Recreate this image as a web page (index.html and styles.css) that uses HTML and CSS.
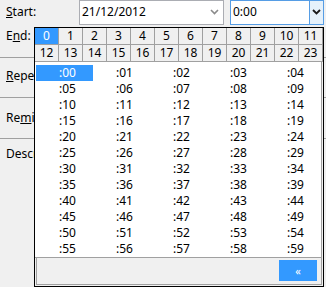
FILE: index.html
```html
<!DOCTYPE html>
<html lang="en">
<head>
  <meta charset="UTF-8">
  <title>Event time</title>
  <link rel="stylesheet" href="styles.css">
</head>
<body>

  <div class="form">
    <div class="row row-start">
      <label class="label"><u>S</u>tart:</label>
      <div class="combo combo-date">
        <span class="value">21/12/2012</span>
        <span class="arrow">
          <svg width="9" height="6" viewBox="0 0 9 6"><polyline points="1,1 4.5,4.5 8,1" fill="none" stroke="#8a8a8a" stroke-width="1.6"/></svg>
        </span>
      </div>
      <div class="combo combo-time">
        <span class="value">0:00</span>
        <span class="drop">
          <svg width="9" height="6" viewBox="0 0 9 6"><polyline points="1,1 4.5,4.5 8,1" fill="none" stroke="#1a1a1a" stroke-width="1.8"/></svg>
        </span>
      </div>
    </div>
    <div class="row row-end">
      <label class="label">E<u>n</u>d:</label>
    </div>
    <div class="section section-repeat">
      <label class="label clipped"><u>R</u>epeat</label>
    </div>
    <div class="section section-remind">
      <label class="label clipped">Re<u>m</u>inder</label>
    </div>
    <div class="section section-desc">
      <label class="label clipped">Description</label>
    </div>
  </div>

  <div class="popup">
    <div class="hours" id="hours"></div>
    <div class="lower">
      <div class="minutes" id="minutes"></div>
      <div class="footer">
        <button class="collapse">&laquo;</button>
      </div>
    </div>
  </div>

  <script>
    const hours = document.getElementById('hours');
    const minutes = document.getElementById('minutes');

    // 0-11 on the first row, 12-23 on the second
    for (let h = 0; h < 24; h++) {
      const cell = document.createElement('div');
      cell.className = 'hour' + (h === 0 ? ' selected' : '');
      cell.textContent = h;
      hours.appendChild(cell);
    }

    for (let m = 0; m < 60; m++) {
      const cell = document.createElement('div');
      cell.className = 'minute' + (m === 0 ? ' selected' : '');
      cell.textContent = ':' + String(m).padStart(2, '0');
      minutes.appendChild(cell);
    }
  </script>

</body>
</html>
```

FILE: styles.css
```css
body {
  margin: 0;
  background: #f0f0f0;
  font-family: "Segoe UI", "Noto Sans", sans-serif;
  font-size: 12px;
  line-height: 16px;
  color: #000;
  overflow: hidden;
  height: 287px;
}

.form {
  width: 326px;
}

.label {
  display: block;
  padding-left: 6px;
  width: 70px;
  flex-shrink: 0;
}

/* labels hidden behind the popup */
.label.clipped {
  width: 28px;
  overflow: hidden;
  white-space: nowrap;
}

.row {
  display: flex;
  align-items: center;
}

.row-start {
  margin-top: -1px;
  height: 26px;
}

.row-end {
  height: 32px;
  align-items: flex-start;
  padding-top: 3px;
  box-sizing: border-box;
}

.combo {
  height: 25px;
  box-sizing: border-box;
  background: #fff;
  border: 1px solid #abadb3;
  display: flex;
  align-items: center;
}

.combo .value {
  flex: 1;
  padding-left: 2px;
}

.combo-date {
  margin-left: 3px;
  width: 145px;
}

.combo-date .arrow {
  width: 17px;
  display: flex;
  justify-content: center;
}

.combo-time {
  margin-left: 6px;
  width: 94px;
  border-color: #569de5;
}

.combo-time .drop {
  align-self: stretch;
  width: 13px;
  background: #e5f1fb;
  border-left: 1px solid #569de5;
  display: flex;
  align-items: center;
  justify-content: center;
}

.section {
  border-top: 1px solid #a0a0a0;
  box-sizing: border-box;
}

.section-repeat {
  height: 40px;
  padding-top: 10px;
}

.section-remind {
  height: 41px;
  padding-top: 12px;
}

.section-desc {
  padding-top: 7px;
}

/* popup over the form */
.popup {
  position: absolute;
  left: 34px;
  top: 27px;
  width: 288px;
  height: 258px;
  border: 1px solid #000;
  background: #f0f0f0;
  display: flex;
  flex-direction: column;
}

.hours {
  display: grid;
  grid-template-columns: repeat(12, 23px);
  grid-auto-rows: 16px;
  gap: 1px;
  background: #a0a0a0;
  padding: 0 1px 1px 0;
  width: 288px;
  box-sizing: border-box;
}

.hour {
  background: #f0f0f0;
  text-align: center;
  line-height: 16px;
}

.hour.selected {
  background: #3399ff;
  color: #fff;
}

.lower {
  flex: 1;
  display: flex;
  flex-direction: column;
}

.minutes {
  background: #fff;
  display: grid;
  grid-template-columns: repeat(5, 57px);
  grid-auto-rows: 16px;
  padding: 3px 0 0 1px;
  margin-right: 1px;
  border-right: 1px solid #a0a0a0;
  border-bottom: 1px solid #a0a0a0;
}

.minute {
  padding-left: 23px;
}

.minute.selected {
  background: #3399ff;
  color: #fff;
}

.footer {
  flex: 1;
  margin: 0 1px 1px 1px;
  border: 1px solid #a0a0a0;
  border-top: none;
  display: flex;
  justify-content: flex-end;
  align-items: flex-start;
  padding: 2px 4px 0 0;
}

.collapse {
  width: 38px;
  height: 21px;
  border: none;
  padding: 0;
  background: #3399ff;
  color: #fff;
  font-family: "Segoe UI", "Noto Sans", sans-serif;
  font-size: 11px;
  line-height: 21px;
}
```
